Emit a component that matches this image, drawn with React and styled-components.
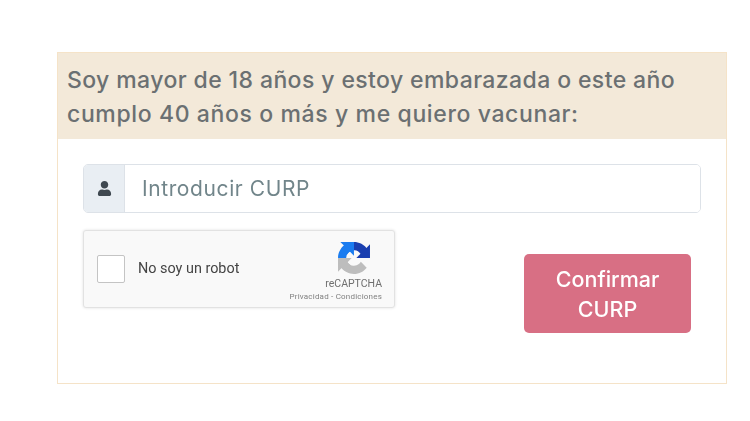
import React from "react";
import styled, { createGlobalStyle } from "styled-components";
import { FaUser } from "react-icons/fa";

const GlobalStyle = createGlobalStyle`
  html, body {
    margin: 0;
    background: #fff;
  }
  body {
    font-family: "Inter", "Open Sans", sans-serif;
  }
`;

const Page = styled.div`
  width: 750px;
  height: 421px;
  padding: 52px 0 0 57px;
  box-sizing: border-box;
  overflow: hidden;
  filter: blur(0.4px);
`;

const Card = styled.section`
  width: 670px;
  height: 332px;
  box-sizing: border-box;
  border: 1px solid #f5e3c8;
  display: flex;
  flex-direction: column;
`;

const Header = styled.h2`
  margin: 0;
  height: 86px;
  padding: 10px 9px 0;
  box-sizing: border-box;
  background: #f3e9d9;
  color: #6b7072;
  font-size: 23px;
  font-weight: 450;
  line-height: 34px;
  white-space: nowrap;
`;

const HeaderLine = styled.span`
  display: block;
  letter-spacing: ${(props) => props.$spacing}px;
`;

const Body = styled.div`
  padding: 25px 25px 0;
`;

const InputGroup = styled.div`
  display: flex;
  width: 618px;
  height: 49px;
  box-sizing: border-box;
  border: 1px solid #dde2e8;
  border-radius: 5px;
  overflow: hidden;
`;

const Addon = styled.span`
  width: 40px;
  flex: none;
  display: flex;
  align-items: center;
  justify-content: center;
  background: #e9eef3;
  border-right: 1px solid #dde2e8;
  color: #3f4850;
  font-size: 15px;
`;

const Field = styled.input`
  flex: 1;
  border: 0;
  outline: 0;
  padding: 0 17px;
  font-family: "Inter", sans-serif;
  font-size: 21px;
  letter-spacing: 0.6px;
  color: #71858a;
  &::placeholder {
    color: #71858a;
    opacity: 1;
  }
`;

const Row = styled.div`
  display: flex;
  align-items: flex-start;
  margin-top: 17px;
`;

const Captcha = styled.div`
  width: 312px;
  height: 78px;
  box-sizing: border-box;
  display: flex;
  align-items: center;
  padding: 0 13px;
  background: #f9f9f9;
  border: 1px solid #e2e2e2;
  border-radius: 3px;
  box-shadow: 0 0 3px rgba(0, 0, 0, 0.12);
  font-family: "Roboto", sans-serif;
`;

const Check = styled.span`
  width: 28px;
  height: 28px;
  flex: none;
  box-sizing: border-box;
  background: #fff;
  border: 1.5px solid #c4c4c4;
  border-radius: 2px;
`;

const CaptchaLabel = styled.span`
  margin: 0 0 2px 13px;
  font-size: 14.4px;
  color: #444;
`;

const Brand = styled.div`
  margin-left: auto;
  margin-top: 6px;
  margin-right: -1px;
  display: flex;
  flex-direction: column;
  align-items: flex-end;
`;

const BrandName = styled.span`
  font-size: 10.5px;
  line-height: 12px;
  margin-top: 4px;
  color: #6f6f6f;
`;

const BrandLinks = styled.span`
  font-size: 8px;
  line-height: 10px;
  margin-top: 2px;
  letter-spacing: 0.2px;
  color: #7f7f7f;
`;

const LogoSlot = styled.svg`
  margin-right: 12px;
`;

const Submit = styled.button`
  width: 167px;
  height: 79px;
  margin: 24px 0 0 129px;
  flex: none;
  border: 0;
  border-radius: 5px;
  background: #d86f84;
  color: #fff;
  font-family: "Inter", sans-serif;
  font-size: 21.5px;
  font-weight: 500;
  line-height: 30px;
  padding: 0 24px;
`;

const arm =
  "M64 31.955l-.033-1.37V4.687l-7.16 7.16C50.948 4.674 42.033.093 32.05.093c-10.4 0-19.622 4.96-25.458 12.64l11.736 11.86c1.15-2.127 2.784-3.955 4.77-5.332 2.05-1.6 4.952-2.906 8.952-2.906.484 0 .857.057 1.132.163 4.956.39 9.25 3.125 11.78 7.1l-8.307 8.307c10.522-.04 22.4-.066 27.45.037";

function LogoShape() {
  return (
    <>
      <path d={arm} transform="rotate(180 32 32)" />
      <path d={arm} transform="rotate(-90 32 32)" />
      <path d={arm} />
    </>
  );
}

function RecaptchaLogo() {
  return (
    <LogoSlot width="32" height="32" viewBox="0 0 64 64" aria-hidden="true">
      <defs>
        <clipPath id="rc-left">
          <rect x="0" y="0" width="32" height="32" />
        </clipPath>
        <clipPath id="rc-right">
          <rect x="32" y="0" width="32" height="32" />
        </clipPath>
        <clipPath id="rc-bottom">
          <rect x="0" y="32" width="64" height="32" />
        </clipPath>
      </defs>
      <g clipPath="url(#rc-left)" fill="#1a7cf0">
        <LogoShape />
      </g>
      <g clipPath="url(#rc-right)" fill="#1a3fb0">
        <LogoShape />
      </g>
      <g clipPath="url(#rc-bottom)" fill="#bdbdbd">
        <LogoShape />
      </g>
    </LogoSlot>
  );
}

export default function App() {
  return (
    <Page>
      <GlobalStyle />
      <Card>
        <Header>
          <HeaderLine $spacing={0.4}>
            Soy mayor de 18 años y estoy embarazada o este año
          </HeaderLine>
          <HeaderLine $spacing={0.62}>
            cumplo 40 años o más y me quiero vacunar:
          </HeaderLine>
        </Header>
        <Body>
          <InputGroup>
            <Addon>
              <FaUser />
            </Addon>
            <Field placeholder="Introducir CURP" />
          </InputGroup>
          <Row>
            <Captcha>
              <Check />
              <CaptchaLabel>No soy un robot</CaptchaLabel>
              <Brand>
                <RecaptchaLogo />
                <BrandName>reCAPTCHA</BrandName>
                <BrandLinks>Privacidad - Condiciones</BrandLinks>
              </Brand>
            </Captcha>
            <Submit>Confirmar CURP</Submit>
          </Row>
        </Body>
      </Card>
    </Page>
  );
}
